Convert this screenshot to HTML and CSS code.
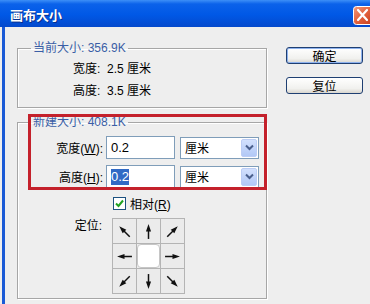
FILE: index.html
```html
<!DOCTYPE html>
<html lang="zh-CN">
<head>
    <meta charset="UTF-8">
    <meta name="viewport" content="width=device-width, initial-scale=1.0">
    <title>画布大小</title>
    <link rel="stylesheet" href="styles.css">
</head>
<body>
    <div class="window">
        <div class="titlebar">
            <span class="title">画布大小</span>
            <span class="close">
                <svg width="21" height="19" viewBox="0 0 21 19">
                    <defs>
                        <linearGradient id="cg" x1="0" y1="0" x2="1" y2="1">
                            <stop offset="0" stop-color="#f29a7c"/>
                            <stop offset="0.5" stop-color="#e2603c"/>
                            <stop offset="1" stop-color="#c43c1c"/>
                        </linearGradient>
                    </defs>
                    <rect x="0.5" y="0.5" width="20" height="18" rx="3" fill="url(#cg)" stroke="#fff"/>
                    <path d="M5 4 L14 14 M14 4 L5 14" stroke="#fff" stroke-width="2.2" stroke-linecap="round"/>
                </svg>
            </span>
        </div>

        <div class="content">
            <div class="main">
                <fieldset class="group current">
                    <legend>当前大小: 356.9K</legend>
                    <div class="info">宽度:&nbsp; 2.5 厘米</div>
                    <div class="info">高度:&nbsp; 3.5 厘米</div>
                </fieldset>

                <fieldset class="group new">
                    <legend>新建大小: 408.1K</legend>
                    <div class="field-row">
                        <span class="field-label">宽度(<u>W</u>):</span>
                        <span class="text-input">0.2</span>
                        <span class="select">
                            <span>厘米</span>
                            <span class="drop">
                                <svg width="9" height="7" viewBox="0 0 9 7"><path d="M1 1.5 L4.5 5 L8 1.5" fill="none" stroke="#4a5f8c" stroke-width="2"/></svg>
                            </span>
                        </span>
                    </div>
                    <div class="field-row second">
                        <span class="field-label">高度(<u>H</u>):</span>
                        <span class="text-input"><span class="sel">0.2</span></span>
                        <span class="select">
                            <span>厘米</span>
                            <span class="drop">
                                <svg width="9" height="7" viewBox="0 0 9 7"><path d="M1 1.5 L4.5 5 L8 1.5" fill="none" stroke="#4a5f8c" stroke-width="2"/></svg>
                            </span>
                        </span>
                    </div>
                    <div class="check-row">
                        <span class="checkbox">
                            <svg width="11" height="11" viewBox="0 0 11 11"><path d="M2 5.5 L4.5 8 L9 2.5" fill="none" stroke="#21a121" stroke-width="2"/></svg>
                        </span>
                        <span>相对(<u>R</u>)</span>
                    </div>
                    <div class="anchor-row">
                        <span class="anchor-label">定位:</span>
                        <div class="anchor-grid">
                            <span class="cell"><svg class="arrow r315" viewBox="0 0 16 16"><path d="M8 15 V5"/><polygon points="8,1 5.6,8 10.4,8"/></svg></span>
                            <span class="cell"><svg class="arrow" viewBox="0 0 16 16"><path d="M8 15 V5"/><polygon points="8,1 5.6,8 10.4,8"/></svg></span>
                            <span class="cell"><svg class="arrow r45" viewBox="0 0 16 16"><path d="M8 15 V5"/><polygon points="8,1 5.6,8 10.4,8"/></svg></span>
                            <span class="cell"><svg class="arrow r270" viewBox="0 0 16 16"><path d="M8 15 V5"/><polygon points="8,1 5.6,8 10.4,8"/></svg></span>
                            <span class="cell center"></span>
                            <span class="cell"><svg class="arrow r90" viewBox="0 0 16 16"><path d="M8 15 V5"/><polygon points="8,1 5.6,8 10.4,8"/></svg></span>
                            <span class="cell"><svg class="arrow r225" viewBox="0 0 16 16"><path d="M8 15 V5"/><polygon points="8,1 5.6,8 10.4,8"/></svg></span>
                            <span class="cell"><svg class="arrow r180" viewBox="0 0 16 16"><path d="M8 15 V5"/><polygon points="8,1 5.6,8 10.4,8"/></svg></span>
                            <span class="cell"><svg class="arrow r135" viewBox="0 0 16 16"><path d="M8 15 V5"/><polygon points="8,1 5.6,8 10.4,8"/></svg></span>
                        </div>
                    </div>
                </fieldset>
            </div>

            <div class="buttons">
                <button class="btn default">确定</button>
                <button class="btn">复位</button>
            </div>
        </div>

        <div class="highlight"></div>
    </div>
</body>
</html>
```

FILE: styles.css
```css
* {
    box-sizing: border-box;
}
body {
    margin: 0;
    background: #eeeeee;
    font-family: "Liberation Sans", "Noto Sans CJK SC", sans-serif;
    font-size: 12px;
    color: #000;
}
.window {
    position: relative;
    width: 370px;
    height: 304px;
    overflow: hidden;
}
.titlebar {
    height: 27px;
    display: flex;
    justify-content: space-between;
    align-items: center;
    padding-left: 10px;
    background: linear-gradient(#3d8ff7 0, #0b62ea 4px, #0058e6 55%, #0449cc 100%);
}
.title {
    color: #fff;
    font-family: "Noto Sans CJK SC", sans-serif;
    font-weight: bold;
    font-size: 13px;
    text-shadow: 1px 1px 0 #0a2f8a;
    margin-top: 2px;
}
.close {
    display: flex;
    align-self: flex-start;
    margin-top: 6px;
    margin-right: -4px;
}
.content {
    display: flex;
    height: 277px;
    margin-left: 2px;
    border-left: 3px solid #1a5ad6;
}
.main {
    padding-left: 12px;
    width: 262px;
}
.group {
    margin: 0;
    width: 250px;
    border: 1px solid #a6a6a6;
    box-shadow: 1px 1px 0 #fff, inset 1px 1px 0 #fff;
}
.group legend {
    margin-left: 13px;
    padding: 0 2px;
    color: #3a5ea6;
    line-height: 14px;
}
.current {
    margin-top: 14px;
    padding: 3px 0 5px 0;
}
.info {
    line-height: 22px;
    padding-left: 55px;
}
.new {
    margin-top: 7px;
    padding: 7px 0 4px 0;
    height: 184px;
}
.field-row {
    display: flex;
    align-items: center;
    height: 23px;
}
.field-row.second {
    margin-top: 6px;
}
.field-label {
    width: 88px;
    padding-right: 3px;
    text-align: right;
}
.text-input {
    width: 69px;
    height: 23px;
    display: flex;
    align-items: center;
    padding-left: 4px;
    background: #fff;
    border: 1px solid #7f9db9;
    font-size: 13px;
}
.sel {
    background: #316ac5;
    color: #fff;
    line-height: 16px;
}
.select {
    width: 79px;
    height: 22px;
    margin-left: 5px;
    display: flex;
    align-items: center;
    padding-left: 4px;
    background: #fff;
    border: 1px solid #7f9db9;
}
.drop {
    width: 16px;
    height: 18px;
    margin-left: auto;
    margin-right: 1px;
    display: flex;
    align-items: center;
    justify-content: center;
    border: 1px solid #bccdf5;
    border-radius: 2px;
    background: linear-gradient(#d2e0fd, #b2c8f6);
}
.check-row {
    display: flex;
    align-items: center;
    height: 14px;
    margin-top: 8px;
    padding-left: 95px;
}
.checkbox {
    width: 13px;
    height: 13px;
    margin-right: 4px;
    display: flex;
    align-items: center;
    justify-content: center;
    background: #fff;
    border: 1px solid #1c5180;
}
.anchor-row {
    display: flex;
    margin-top: 8px;
}
.anchor-label {
    width: 84px;
    text-align: right;
    line-height: 14px;
    margin-top: 1px;
}
.anchor-grid {
    margin-left: 10px;
    display: grid;
    grid-template-columns: repeat(3, 24px);
    grid-template-rows: repeat(3, 25px);
}
.cell {
    display: flex;
    align-items: center;
    justify-content: center;
    background: #ebebeb;
    border: 1px solid #b4b4b4;
    margin: 0 -1px -1px 0;
}
.cell.center {
    background: #fff;
    border-color: #c6c6c6;
    border-radius: 4px;
    margin: 1px 0 0 1px;
}
.arrow {
    width: 17px;
    height: 17px;
}
.arrow path {
    stroke: #111;
    stroke-width: 1.4;
}
.arrow polygon {
    fill: #111;
}
.r45 { transform: rotate(45deg); }
.r90 { transform: rotate(90deg); }
.r135 { transform: rotate(135deg); }
.r180 { transform: rotate(180deg); }
.r225 { transform: rotate(225deg); }
.r270 { transform: rotate(270deg); }
.r315 { transform: rotate(315deg); }
.buttons {
    display: flex;
    flex-direction: column;
    gap: 13px;
    margin-left: 19px;
    padding-top: 20px;
}
.btn {
    width: 77px;
    height: 17px;
    padding: 0;
    font-family: "Noto Sans CJK SC", sans-serif;
    font-size: 12px;
    line-height: 15px;
    color: #000;
    border: 1px solid #1f3f72;
    border-radius: 3px;
    background: linear-gradient(#ffffff, #f1f1ee 70%, #d9d6cf);
}
.btn.default {
    box-shadow: inset 0 0 0 1px #8eb2ee;
}
.highlight {
    position: absolute;
    left: 28px;
    top: 114px;
    width: 239px;
    height: 76px;
    border: 3px solid #c4212b;
}
```
